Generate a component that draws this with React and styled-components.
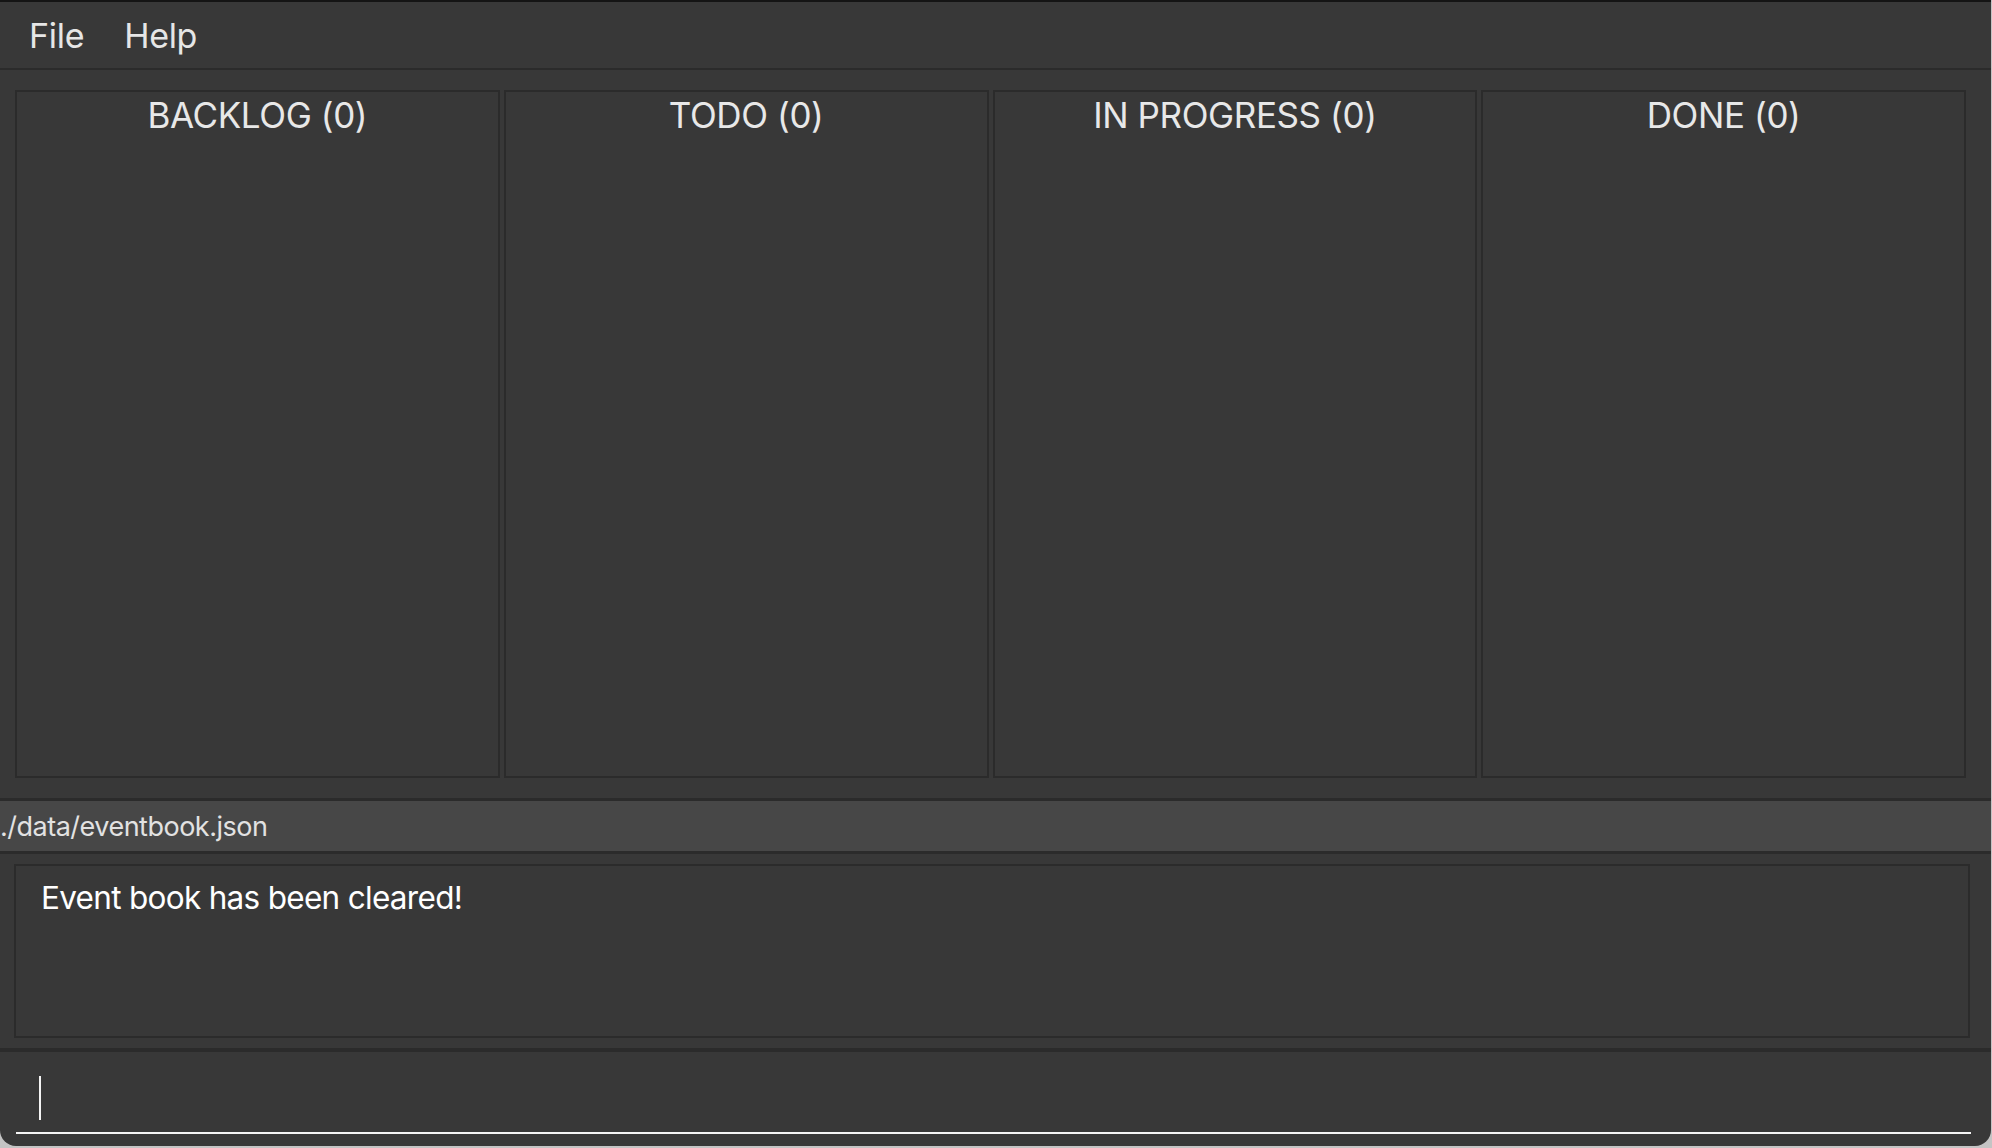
import React from 'react'
import styled, { createGlobalStyle } from 'styled-components';

const GlobalStyle = createGlobalStyle`
html, body {
  margin: 0;
  padding: 0;
  background: #c4c4c4;
  overflow: hidden;
}
* { box-sizing: border-box; }
`;

const Window = styled.div`
width: 1991px;
height: 1146px;
background-color: #383838;
border-top: 2px solid #141414;
border-radius: 0 0 16px 16px;
display: flex;
flex-direction: column;
overflow: hidden;
font-family: Inter, "Open Sans", sans-serif;
`;

const MenuBar = styled.div`
height: 68px;
flex-shrink: 0;
display: flex;
align-items: center;
gap: 40px;
padding-left: 29px;
border-bottom: 2px solid #2b2b2b;
`;

const MenuItem = styled.span`
font-size: 34px;
color: #e6e6e6;
letter-spacing: -0.3px;
`;

const Board = styled.div`
flex: 1;
min-height: 0;
display: grid;
grid-template-columns: repeat(4, 1fr);
gap: 4px;
padding: 20px 25px 20px 15px;
`;

const Column = styled.div`
border: 2px solid #2b2b2b;
display: flex;
flex-direction: column;
align-items: center;
`;

const ColumnTitle = styled.div`
margin-top: 2px;
font-size: 35px;
color: #e8e8e8;
letter-spacing: -0.4px;
`;

const StatusBar = styled.div`
height: 56px;
flex-shrink: 0;
background-color: #474747;
border-top: 3px solid #2b2b2b;
border-bottom: 3px solid #2b2b2b;
display: flex;
align-items: center;
font-size: 27px;
color: #e2e2e2;
letter-spacing: -0.5px;
`;

const ResultArea = styled.div`
height: 198px;
flex-shrink: 0;
padding: 10px 21px 10px 14px;
border-bottom: 4px solid #2b2b2b;
`;

const ResultBox = styled.div`
height: 100%;
border: 2px solid #2b2b2b;
padding: 12px 25px;
font-size: 31.5px;
color: #ffffff;
letter-spacing: -0.7px;
`;

const CommandArea = styled.div`
height: 94px;
flex-shrink: 0;
padding: 22px 20px 0 16px;
`;

const CommandInput = styled.div`
height: 60px;
border-bottom: 2px solid #f4f4f4;
padding: 2px 0 0 23px;
`;

const Caret = styled.div`
width: 2px;
height: 44px;
background-color: #f4f4f4;
`;

const columns = [
  { name: 'BACKLOG', count: 0 },
  { name: 'TODO', count: 0 },
  { name: 'IN PROGRESS', count: 0 },
  { name: 'DONE', count: 0 },
];

const App = () => {
  return (
    <>
      <GlobalStyle />
      <Window>
        <MenuBar>
          <MenuItem>File</MenuItem>
          <MenuItem>Help</MenuItem>
        </MenuBar>
        <Board>
          {columns.map((c) => (
            <Column key={c.name}>
              <ColumnTitle>{c.name} ({c.count})</ColumnTitle>
            </Column>
          ))}
        </Board>
        <StatusBar>./data/eventbook.json</StatusBar>
        <ResultArea>
          <ResultBox>Event book has been cleared!</ResultBox>
        </ResultArea>
        <CommandArea>
          <CommandInput>
            <Caret />
          </CommandInput>
        </CommandArea>
      </Window>
    </>
  )
}

export default App
